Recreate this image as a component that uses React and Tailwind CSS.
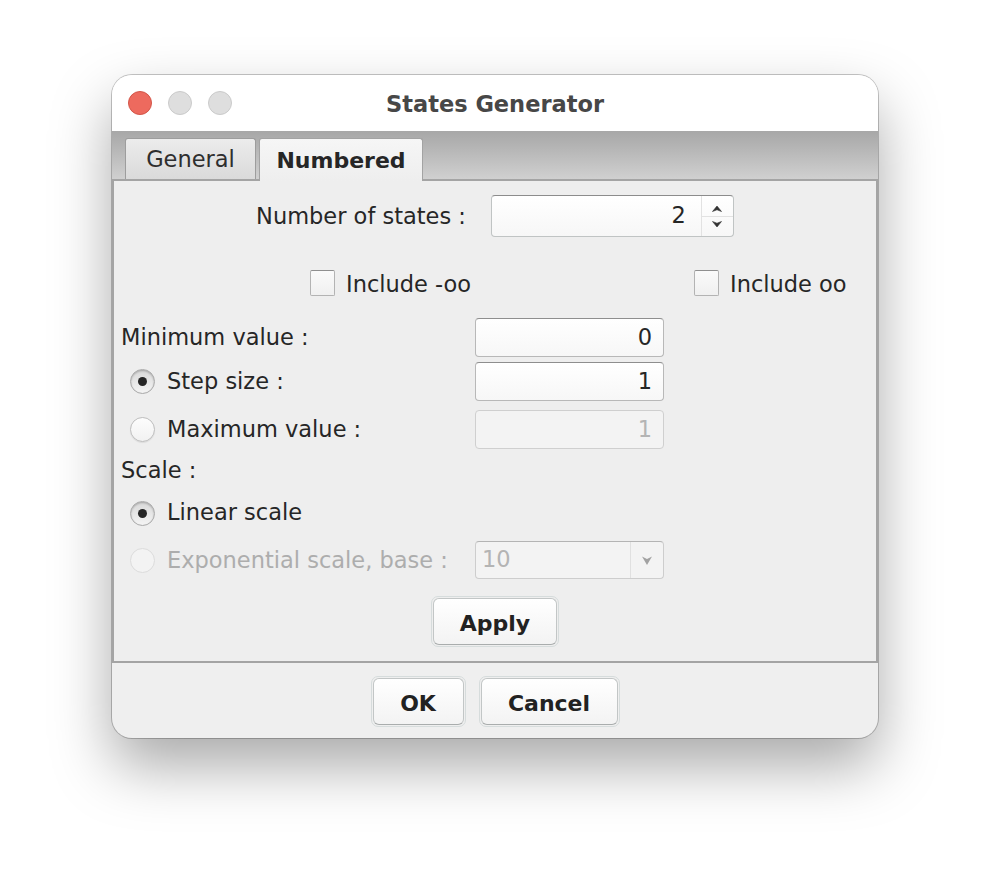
import React from "react";

const ink = "text-[#262626]";

function Light({ color }) {
  return <span className={`block w-[24px] h-[24px] rounded-full border ${color}`} />;
}

function Radio({ checked, disabled }) {
  if (disabled) {
    return <span className="block w-[25px] h-[25px] rounded-full border border-[#dcdcdc] bg-[#f3f3f3]" />;
  }
  return (
    <span
      className={`flex items-center justify-center w-[25px] h-[25px] rounded-full border ${
        checked
          ? "border-[#a9a9a9] bg-gradient-to-b from-[#d9d9d9] to-[#f4f4f4] shadow-[inset_0_1px_2px_rgba(0,0,0,0.25)]"
          : "border-[#bdbdbd] bg-gradient-to-b from-[#fdfdfd] to-[#f1f1f1] shadow-[0_1px_1px_rgba(0,0,0,0.08)]"
      }`}
    >
      {checked && <span className="block w-[9px] h-[9px] rounded-full bg-[#262626]" />}
    </span>
  );
}

function Checkbox() {
  return (
    <span className="block w-[25px] h-[26px] rounded-[2px] border border-[#b3b3b3] border-t-[#8f8f8f] bg-gradient-to-b from-[#fafafa] to-[#f0f0f0]" />
  );
}

function Field({ value, disabled }) {
  return (
    <div
      className={`flex items-center justify-end w-[189px] h-[39px] rounded-[4px] border pr-[11px] text-[22.5px] ${
        disabled
          ? "border-[#cfcfcf] bg-[#f3f3f3] text-[#b4b4b4]"
          : `border-[#b8b8b8] border-t-[#8e8e8e] bg-gradient-to-b from-white to-[#f7f7f7] ${ink}`
      }`}
    >
      {value}
    </div>
  );
}

function Button({ children, className }) {
  return (
    <div className={`rounded-[7px] border border-[#d6dcdc] p-[1px] ${className}`}>
      <div className="flex h-full items-center justify-center rounded-[6px] border border-[#c2c6c6] border-b-[#a9adad] bg-gradient-to-b from-white to-[#f3f3f3] pt-[3px] text-[22px] font-bold text-[#222]">
        {children}
      </div>
    </div>
  );
}

export default function App() {
  return (
    <div className="min-h-[886px] w-[990px] bg-white pt-[75px] pl-[112px] font-['DejaVu_Sans',sans-serif]">
      <div className="flex h-[663px] w-[766px] flex-col overflow-hidden rounded-[20px] bg-[#efefef] shadow-[0_0_0_1px_rgba(0,0,0,0.22),0_28px_60px_rgba(0,0,0,0.34)]">
        {/* title bar */}
        <div className="relative flex h-[56px] items-center bg-white pl-[16px]">
          <div className="flex gap-[16px]">
            <Light color="bg-[#ed6a5e] border-[#d25548]" />
            <Light color="bg-[#dedede] border-[#cacaca]" />
            <Light color="bg-[#dedede] border-[#cacaca]" />
          </div>
          <div className="absolute inset-x-0 top-0 flex h-full items-center justify-center pt-[3px] pointer-events-none">
            <span className="text-[22.5px] font-bold text-[#474747]">States Generator</span>
          </div>
        </div>

        {/* tab strip */}
        <div className="flex h-[48px] items-end bg-gradient-to-b from-[#a7a7a7] to-[#d0d0d0] pl-[13px]">
          <div className="flex h-[41px] w-[131px] items-center justify-center rounded-t-[3px] border border-b-0 border-[#9d9d9d] bg-gradient-to-b from-[#ececec] to-[#dadada] pt-[2px] text-[22.5px] text-[#2e2e2e]">
            General
          </div>
          <div className="relative z-10 -mb-[2px] ml-[3px] flex h-[43px] w-[164px] items-center justify-center rounded-t-[3px] border border-b-0 border-[#a3a3a3] bg-gradient-to-b from-[#f6f6f6] to-[#eeeeee] text-[22px] font-bold text-[#262626]">
            Numbered
          </div>
        </div>

        {/* panel */}
        <div className={`flex h-[484px] flex-col border-2 border-[#a4a4a4] bg-[#eeeeee] text-[22.5px] ${ink}`}>
          <div className="mt-[14px] flex items-center justify-center gap-[25px]">
            <span className="pt-[2px]">Number of states :</span>
            <div className="flex h-[42px] w-[243px] rounded-[4px] border border-[#c0c4c4] border-t-[#8c8c8c] bg-gradient-to-b from-white to-[#f7f7f7]">
              <div className="flex flex-1 items-center justify-end pr-[15px]">2</div>
              <div className="flex w-[32px] flex-col border-l border-[#e2e2e2]">
                <div className="flex flex-1 items-end justify-center border-b border-[#e2e2e2] pb-[4px]">
                  <svg width="10" height="7" viewBox="0 0 10 7">
                    <path d="M0.5 6.5 L5 1 L9.5 6.5 L5 4.8 Z" fill="#333" stroke="#333" strokeWidth="0.6" strokeLinejoin="round" />
                  </svg>
                </div>
                <div className="flex flex-1 items-start justify-center pt-[4px]">
                  <svg width="10" height="7" viewBox="0 0 10 7">
                    <path d="M0.5 0.5 L5 6 L9.5 0.5 L5 2.2 Z" fill="#333" stroke="#333" strokeWidth="0.6" strokeLinejoin="round" />
                  </svg>
                </div>
              </div>
            </div>
          </div>

          <div className="mt-[33px] flex h-[26px] items-center pl-[196px]">
            <div className="flex w-[384px] items-center gap-[11px]">
              <Checkbox />
              <span className="pt-[3px]">Include -oo</span>
            </div>
            <div className="flex items-center gap-[11px]">
              <Checkbox />
              <span className="pt-[3px]">Include oo</span>
            </div>
          </div>

          <div className="mt-[22px] grid grid-cols-[361px_189px] items-center">
            <span className="pl-[7px]">Minimum value :</span>
            <Field value="0" />
          </div>

          <div className="mt-[5px] grid grid-cols-[361px_189px] items-center">
            <span className="flex items-center gap-[12px] pl-[16px]">
              <Radio checked />
              Step size :
            </span>
            <Field value="1" />
          </div>

          <div className="mt-[9px] grid grid-cols-[361px_189px] items-center">
            <span className="flex items-center gap-[12px] pl-[16px]">
              <Radio />
              Maximum value :
            </span>
            <Field value="1" disabled />
          </div>

          <div className="mt-[5px] flex h-[34px] items-center pl-[7px]">Scale :</div>

          <div className="mt-[5px] flex h-[40px] items-center gap-[12px] pl-[16px]">
            <Radio checked />
            Linear scale
          </div>

          <div className="mt-[8px] grid grid-cols-[361px_189px] items-center">
            <span className="flex items-center gap-[12px] pl-[16px] text-[#adadad]">
              <Radio disabled />
              <span className="pt-[2px]">Exponential scale, base :</span>
            </span>
            <div className="flex h-[38px] w-[189px] rounded-[4px] border border-[#cdcdcd] border-t-[#b4b4b4] bg-[#f3f3f3] text-[#b4b4b4]">
              <div className="flex flex-1 items-center pl-[6px]">10</div>
              <div className="flex w-[33px] items-center justify-center border-l border-[#e0e0e0]">
                <svg width="12" height="11" viewBox="0 0 12 11">
                  <path d="M1 1.5 L6 4 L11 1.5 L6 10 Z" fill="#a2a2a2" />
                </svg>
              </div>
            </div>
          </div>

          <div className="mt-[17px] flex justify-center">
            <Button className="h-[51px] w-[128px]">Apply</Button>
          </div>
        </div>

        {/* dialog buttons */}
        <div className="flex flex-1 justify-center gap-[13px] pt-[13px]">
          <Button className="h-[51px] w-[95px]">OK</Button>
          <Button className="h-[51px] w-[141px]">Cancel</Button>
        </div>
      </div>
    </div>
  );
}
